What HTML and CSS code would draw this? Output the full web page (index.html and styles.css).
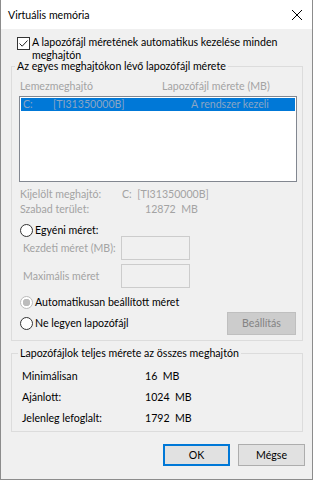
FILE: index.html
```html
<!DOCTYPE html>
<html lang="hu">
<head>
  <meta charset="UTF-8">
  <title>Virtuális memória</title>
  <link rel="stylesheet" href="styles.css">
</head>
<body>
<div class="window">
  <div class="titlebar">
    <span class="title">Virtuális memória</span>
    <svg class="close" width="12" height="12" viewBox="0 0 12 12">
      <path d="M1 1 L11 11 M11 1 L1 11" stroke="#000" stroke-width="1" fill="none"/>
    </svg>
  </div>

  <div class="content">
    <label class="auto-check">
      <span class="checkbox">
        <svg width="11" height="11" viewBox="0 0 11 11">
          <path d="M1.5 5.5 L4.2 8.2 L9.5 2.5" stroke="#222" stroke-width="1" fill="none"/>
        </svg>
      </span>
      <span>A lapozófájl méretének automatikus kezelése minden meghajtón</span>
    </label>

    <fieldset class="group group-drives">
      <legend>Az egyes meghajtókon lévő lapozófájl mérete</legend>
      <div class="cols disabled">
        <span class="col-drive">Lemezmeghajtó</span>
        <span class="col-size">Lapozófájl mérete (MB)</span>
      </div>
      <div class="listbox">
        <div class="list-row selected">
          <span class="cell-letter">C:</span>
          <span class="cell-label">[TI31350000B]</span>
          <span class="cell-size">A rendszer kezeli</span>
        </div>
      </div>

      <div class="info disabled">
        <div class="info-row"><span class="info-key">Kijelölt meghajtó:</span><span>C:&nbsp;&nbsp;[TI31350000B]</span></div>
        <div class="info-row"><span class="info-key">Szabad terület:</span><span class="info-num">12872&nbsp;&nbsp;MB</span></div>
      </div>

      <div class="radio-row radio-custom">
        <span class="radio"></span><span>Egyéni méret:</span>
      </div>
      <div class="field-row field-first disabled">
        <span class="field-label">Kezdeti méret (MB):</span><span class="textbox"></span>
      </div>
      <div class="field-row field-second disabled">
        <span class="field-label">Maximális méret</span><span class="textbox"></span>
      </div>
      <div class="radio-row radio-auto">
        <span class="radio checked-disabled"></span><span>Automatikusan beállított méret</span>
      </div>
      <div class="radio-row radio-none">
        <span class="radio"></span><span>Ne legyen lapozófájl</span>
        <button class="btn btn-set" disabled>Beállítás</button>
      </div>
    </fieldset>

    <fieldset class="group group-total">
      <legend>Lapozófájlok teljes mérete az összes meghajtón</legend>
      <div class="total-row first"><span class="total-key">Minimálisan</span><span>16&nbsp;&nbsp;MB</span></div>
      <div class="total-row"><span class="total-key">Ajánlott:</span><span>1024&nbsp;&nbsp;MB</span></div>
      <div class="total-row"><span class="total-key">Jelenleg lefoglalt:</span><span>1792&nbsp;&nbsp;MB</span></div>
    </fieldset>

    <div class="buttons">
      <button class="btn btn-ok">OK</button>
      <button class="btn">Mégse</button>
    </div>
  </div>
</div>
</body>
</html>
```

FILE: styles.css
```css
body {
  margin: 0;
  font-family: Lato, "Liberation Sans", sans-serif;
  font-size: 10.6px;
  color: #000;
}

.window {
  width: 311px;
  height: 479px;
  border: 1px solid #8c8c8c;
  border-top: none;
  background-color: #f0f0f0;
  overflow: hidden;
  white-space: nowrap;
}

.titlebar {
  height: 29px;
  background-color: #fff;
  display: flex;
  align-items: center;
  justify-content: space-between;
  padding: 0 8px 0 7px;
}

.close {
  margin-right: 1px;
}

.content {
  padding: 7px 9px 0 10px;
}

.auto-check {
  display: flex;
  gap: 2px;
  line-height: 13px;
  padding-left: 6px;
  white-space: normal;
}

.checkbox {
  flex: none;
  width: 11px;
  height: 11px;
  border: 1px solid #333;
  background-color: #fff;
  margin-top: 1px;
}

.checkbox svg {
  display: block;
}

.group {
  border: 1px solid #dcdcdc;
  margin: 0;
  padding: 0 5px 0 7px;
}

.group legend {
  padding: 0 2px;
  margin-left: -4px;
  line-height: 15px;
}

.group-drives {
  margin-top: -3px;
  padding-bottom: 9px;
}

.disabled {
  color: #a3a3a3;
}

.cols {
  display: flex;
  height: 16px;
  align-items: center;
  margin-top: 4px;
  padding-left: 1px;
}

.col-drive {
  width: 142px;
}

.listbox {
  height: 82px;
  border: 1px solid #828790;
  background-color: #fff;
  padding: 1px;
  margin-top: 2px;
}

.list-row {
  display: flex;
  height: 13px;
  line-height: 13px;
  padding-left: 2px;
}

.list-row.selected {
  background-color: #0078d7;
  color: #8aa5c4;
}

.cell-letter {
  width: 30px;
}

.cell-label {
  width: 138px;
}

.info {
  margin-top: 4px;
  padding-left: 1px;
}

.info-row {
  display: flex;
  height: 15px;
  align-items: center;
}

.info-key {
  width: 102px;
}

.info-num {
  padding-left: 23px;
}

.radio-row {
  display: flex;
  align-items: center;
  gap: 2px;
  height: 16px;
  padding-left: 1px;
}

.radio {
  flex: none;
  width: 11px;
  height: 11px;
  border: 1px solid #333;
  border-radius: 50%;
  background-color: #fff;
}

.radio.checked-disabled {
  border-color: #bcbcbc;
  background: radial-gradient(circle, #bcbcbc 0 3.5px, #fff 4px);
}

.radio-custom {
  margin-top: 6px;
}

.field-row {
  display: flex;
  align-items: center;
  height: 24px;
  padding-left: 4px;
}

.field-first {
  margin-top: -2px;
}

.field-second {
  margin-top: 4px;
}

.field-label {
  width: 98px;
}

.textbox {
  width: 67px;
  height: 22px;
  border: 1px solid #cccccc;
  background-color: #f0f0f0;
}

.radio-auto {
  margin-top: 6px;
}

.radio-none {
  margin-top: 5px;
}

.btn {
  font-family: inherit;
  font-size: 10.6px;
  width: 67px;
  height: 22px;
  border: 1px solid #adadad;
  background-color: #e1e1e1;
  color: #000;
  padding: 0;
}

.btn-set {
  margin-left: auto;
  margin-right: 1px;
  width: 69px;
  height: 23px;
  border-color: #bfbfbf;
  background-color: #cccccc;
  color: #838383;
}

.group-total {
  margin-top: 5px;
  padding-bottom: 3px;
  padding-left: 10px;
}

.total-row {
  display: flex;
  height: 21px;
  align-items: center;
}

.total-row.first {
  margin-top: 4px;
}

.total-key {
  width: 123px;
}

.buttons {
  display: flex;
  justify-content: flex-end;
  gap: 8px;
  margin-top: 12px;
  margin-right: -2px;
}

.btn-ok {
  border: 1px solid #0078d7;
  box-shadow: inset 0 0 0 1px #0078d7;
}
```
